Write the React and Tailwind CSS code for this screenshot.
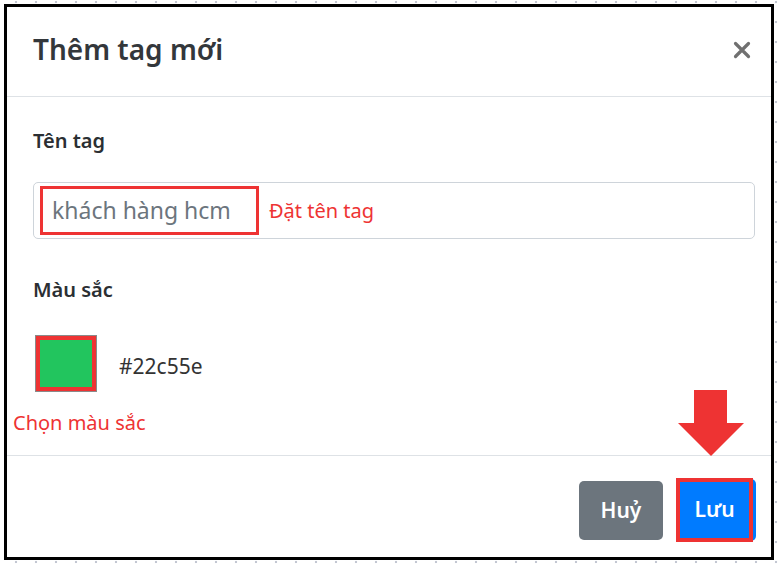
export default function App() {
  return (
    <div
      className="relative w-[778px] h-[567px] overflow-hidden bg-white bg-[radial-gradient(circle,#c3c7d2_1px,transparent_1.6px)] bg-size-[20px_20px] bg-position-[6px_12px] pt-[4px] pl-[4px]"
      style={{ fontFamily: '"Noto Sans", "Open Sans", sans-serif' }}
    >
      <div className="relative w-[770px] h-[556px] border-[3px] border-black bg-white flex flex-col">
        {/* header */}
        <div className="h-[90px] shrink-0 flex items-center justify-between border-b border-[#dee2e6] pl-[26px] pr-[20px]">
          <h2 className="text-[28px] leading-none font-semibold text-[#33373b] -mt-[6px]">Thêm tag mới</h2>
          <svg width="18" height="18" viewBox="0 0 18 18" className="-mt-[4px]">
            <path d="M2.5 2.5 L15.5 15.5 M15.5 2.5 L2.5 15.5" stroke="#707070" strokeWidth="3.2" strokeLinecap="round" />
          </svg>
        </div>

        {/* body */}
        <div className="h-[358px] shrink-0 pl-[26px] pr-[16px] pt-[30px]">
          <div className="text-[20px] leading-[28px] font-semibold text-[#2b2f33]">Tên tag</div>
          <div className="mt-[27px] h-[57px] border border-[#ced4da] rounded-[5px] flex items-center pl-[6px]">
            <div className="h-[49px] w-[219px] border-[3px] border-[#ee3333] flex items-center pl-[9px]">
              <span className="text-[23px] text-[#6c757d]">khách hàng hcm</span>
            </div>
            <span className="ml-[10px] text-[20px] text-[#ee3333]">Đặt tên tag</span>
          </div>

          <div className="mt-[37px] text-[20px] leading-[28px] font-semibold text-[#2b2f33]">Màu sắc</div>
          <div className="mt-[31px] flex items-center">
            <div className="ml-[2px] w-[62px] h-[57px] border border-[#8a8a8a] bg-[#ee3333] p-[4px]">
              <div className="w-full h-full bg-[#22c55e]"></div>
            </div>
            <span className="ml-[22px] mt-[6px] text-[21px] text-[#333]">#22c55e</span>
          </div>
          <div className="mt-[17px] -ml-[20px] text-[20px] leading-[28px] text-[#ee3333]">Chọn màu sắc</div>
        </div>

        {/* footer */}
        <div className="flex-1 border-t border-[#dee2e6] flex justify-end items-start pt-[23px] pr-[15px]">
          <button className="w-[84px] h-[59px] mt-[2px] rounded-[5px] bg-[#6c757d] text-white text-[21px] font-semibold">
            Huỷ
          </button>
          <button className="relative ml-[14px] w-[79px] h-[62px] rounded-[5px] bg-[#007bff] text-white text-[21px] font-semibold">
            <span className="absolute left-[-1px] top-[-1px] w-[77px] h-[64px] border-[4px] border-[#ee3333]"></span>
            <span className="relative pr-[4px]">Lưu</span>
          </button>
        </div>

        {/* arrow */}
        <svg className="absolute left-[670px] top-[383px]" width="68" height="67" viewBox="0 0 68 67">
          <path d="M17 0 H50 V33 H67 L34 66 L1 33 H17 Z" fill="#ee3333" />
        </svg>
      </div>
    </div>
  );
}
